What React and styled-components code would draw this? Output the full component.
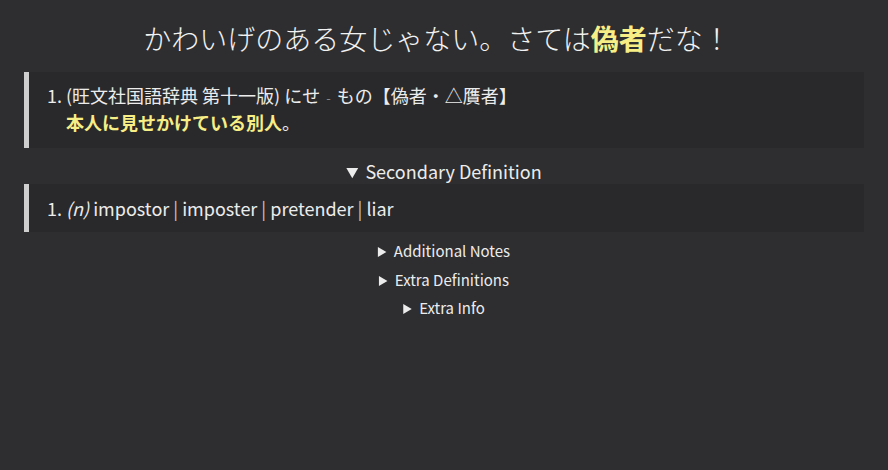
import React from 'react';
import styled, { createGlobalStyle } from 'styled-components';

const GlobalStyle = createGlobalStyle`
  html, body {
    margin: 0;
    padding: 0;
    background: #2e2e30;
  }
  body {
    font-family: "Noto Sans CJK JP", "Noto Sans", sans-serif;
    color: #ececec;
  }
`;

const Page = styled.div`
  padding: 18px 24px 40px;
  min-height: 470px;
  box-sizing: border-box;
`;

const Sentence = styled.h1`
  margin: 0 0 14px;
  padding-right: 14px;
  text-align: center;
  font-size: 28px;
  line-height: 40px;
  font-weight: 300;
  color: #f2f2f2;
`;

const Highlight = styled.span`
  color: #f8ee86;
  font-weight: ${({ $bold }) => ($bold ? 700 : 'inherit')};
`;

const DefBox = styled.div`
  background: #29292b;
  border-left: 5px solid #cfcfcf;
  padding: ${({ $pad }) => $pad || '10px 0 12px'};
  display: flex;
  font-size: ${({ $size }) => $size || 18}px;
  line-height: ${({ $line }) => $line || 27}px;
`;

const Num = styled.span`
  width: 37px;
  text-align: right;
  padding-right: 4px;
  box-sizing: border-box;
  flex-shrink: 0;
`;

const DefBody = styled.div`
  display: flex;
  flex-direction: column;
`;

const Dash = styled.span`
  color: #8a8a8a;
  font-size: 13px;
  line-height: 1;
  margin: 0 6px;
`;

const Meaning = styled.span`
  color: #f8ee86;
  font-weight: 700;
`;

const Pos = styled.i`
  margin-right: 4px;
`;

const Sep = styled.span`
  color: #c4c4c4;
  margin: 0 4px;
`;

const Details = styled.details`
  margin-top: ${({ $top }) => $top || 0}px;
`;

const Summary = styled.summary`
  text-align: center;
  font-size: ${({ $size }) => $size || 15}px;
  line-height: ${({ $line }) => $line || 28.5}px;
  color: #ececec;
  cursor: pointer;
`;

const glosses = ['impostor', 'imposter', 'pretender', 'liar'];

export default function App() {
  return (
    <>
      <GlobalStyle />
      <Page>
        <Sentence>
          かわいげのある女じゃない。さては<Highlight $bold>偽者</Highlight>だな！
        </Sentence>

        <DefBox>
          <Num>1.</Num>
          <DefBody>
            <span>
              (旺文社国語辞典 第十一版) にせ<Dash>-</Dash>もの【偽者・△贋者】
            </span>
            <span>
              <Meaning>本人に見せかけている別人</Meaning>。
            </span>
          </DefBody>
        </DefBox>

        <Details open $top={10}>
          <Summary $size={18} $line={26}>Secondary Definition</Summary>
          <DefBox $line={28} $pad="10px 0">
            <Num>1.</Num>
            <span>
              <Pos>(n)</Pos>
              {glosses.map((g, i) => (
                <React.Fragment key={g}>
                  {i > 0 && <Sep>|</Sep>}
                  {g}
                </React.Fragment>
              ))}
            </span>
          </DefBox>
        </Details>

        <Details $top={5}>
          <Summary>Additional Notes</Summary>
        </Details>
        <Details>
          <Summary>Extra Definitions</Summary>
        </Details>
        <Details>
          <Summary>Extra Info</Summary>
        </Details>
      </Page>
    </>
  );
}
